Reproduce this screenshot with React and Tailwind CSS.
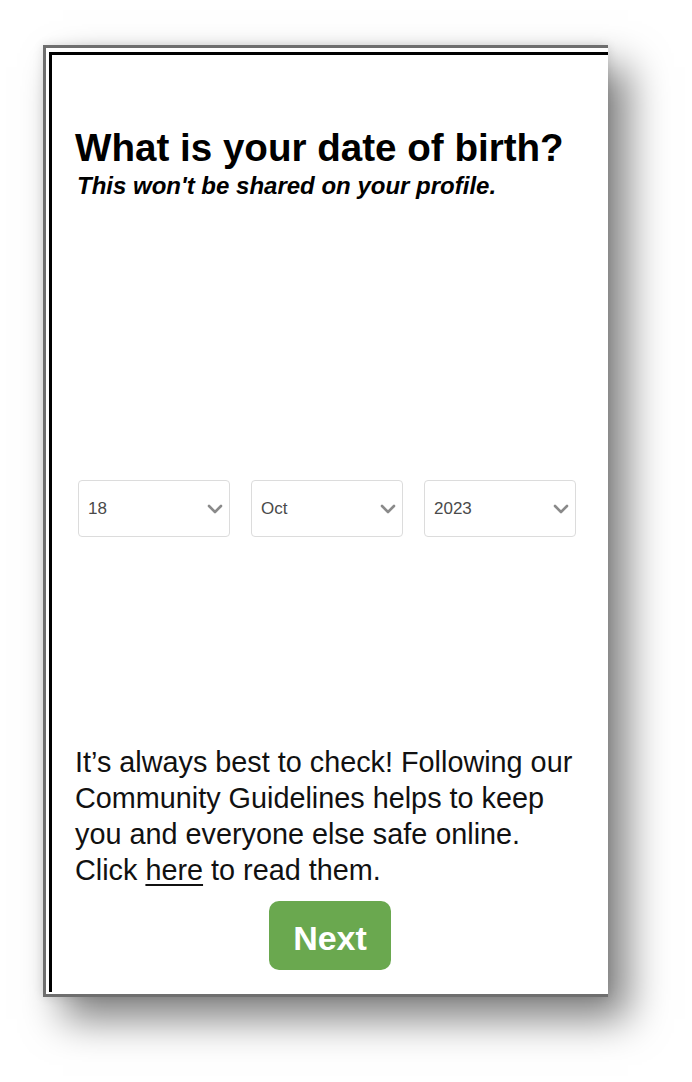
import React, { useState } from 'react';

const DAYS = Array.from({ length: 31 }, (_, i) => String(i + 1));
const MONTHS = ['Jan', 'Feb', 'Mar', 'Apr', 'May', 'Jun', 'Jul', 'Aug', 'Sep', 'Oct', 'Nov', 'Dec'];
const YEARS = Array.from({ length: 100 }, (_, i) => String(2023 - i));

function Chevron() {
  return (
    <svg
      width="16"
      height="10"
      viewBox="0 0 16 10"
      className="pointer-events-none absolute right-[7px] top-1/2 -translate-y-1/2"
    >
      <path d="M2 2 L8 8 L14 2" fill="none" stroke="#8a8a8a" strokeWidth="2.6" strokeLinecap="round" strokeLinejoin="round" />
    </svg>
  );
}

function DateSelect({ options, value, onChange }) {
  return (
    <div className="relative w-[152px] h-[57px]">
      <select
        value={value}
        onChange={(e) => onChange(e.target.value)}
        className="appearance-none w-full h-full rounded-[4px] border border-[#dcdcdc] bg-white pl-[9px] pr-8 text-[17px] text-[#4a4a4a] outline-none"
      >
        {options.map((o) => (
          <option key={o} value={o}>
            {o}
          </option>
        ))}
      </select>
      <Chevron />
    </div>
  );
}

export default function App() {
  const [day, setDay] = useState('18');
  const [month, setMonth] = useState('Oct');
  const [year, setYear] = useState('2023');

  return (
    <div className="min-h-[1082px] bg-white pt-[45px] pl-[43px] font-['Liberation_Sans',Arial,sans-serif]">
      {/* outer frame */}
      <div className="w-[565px] h-[952px] border-l-[3px] border-t-[3px] border-b-[3px] border-[#6e6e6e] bg-white pl-[3px] pt-[4px] pb-[2px] shadow-[20px_22px_38px_rgba(0,0,0,0.5),0_0_10px_rgba(0,0,0,0.12)]">
        {/* inner frame */}
        <div className="h-full border-l-[3px] border-t-[3px] border-black pl-[23px] flex flex-col">
          <h1 className="mt-[71px] text-[38.6px] leading-[1.15] font-bold text-black whitespace-nowrap">
            What is your date of birth?
          </h1>
          <p className="mt-[2px] text-[24px] leading-[1.2] font-bold italic text-black pl-[2px]">
            This won't be shared on your profile.
          </p>

          <div className="mt-[279px] ml-[3px] flex gap-[21px]">
            <DateSelect options={DAYS} value={day} onChange={setDay} />
            <DateSelect options={MONTHS} value={month} onChange={setMonth} />
            <DateSelect options={YEARS} value={year} onChange={setYear} />
          </div>

          <p className="mt-[207px] text-[28.8px] leading-[36px] text-[#111] whitespace-nowrap">
            It’s always best to check! Following our
            <br />
            Community Guidelines helps to keep
            <br />
            you and everyone else safe online.
            <br />
            Click{' '}
            <a href="#" className="underline underline-offset-[4px]">
              here
            </a>{' '}
            to read them.
          </p>

          <div className="mt-[13px] pl-[194px]">
            <button className="w-[122px] h-[69px] rounded-[10px] bg-[#6aa84f] pt-[5px] text-white text-[34px] font-bold">
              Next
            </button>
          </div>
        </div>
      </div>
    </div>
  );
}
